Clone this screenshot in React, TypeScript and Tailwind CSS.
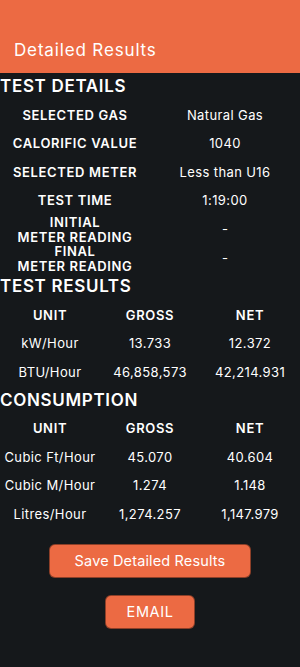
import React from "react";

const details: [string, string][] = [
  ["SELECTED GAS", "Natural Gas"],
  ["CALORIFIC VALUE", "1040"],
  ["SELECTED METER", "Less than U16"],
  ["TEST TIME", "1:19:00"],
];

const results: [string, string, string][] = [
  ["kW/Hour", "13.733", "12.372"],
  ["BTU/Hour", "46,858,573", "42,214.931"],
];

const consumption: [string, string, string][] = [
  ["Cubic Ft/Hour", "45.070", "40.604"],
  ["Cubic M/Hour", "1.274", "1.148"],
  ["Litres/Hour", "1,274.257", "1,147.979"],
];

function SectionTitle({ children }: { children: React.ReactNode }) {
  return (
    <h2 className="flex h-[28px] items-center pb-[1px] text-[17px] font-semibold tracking-[0.04em] text-white">
      {children}
    </h2>
  );
}

function Table({ rows }: { rows: [string, string, string][] }) {
  return (
    <div>
      <div className="grid h-[28.5px] grid-cols-3 items-center text-center text-[13px] font-semibold tracking-[0.05em] text-white">
        <span>UNIT</span>
        <span>GROSS</span>
        <span>NET</span>
      </div>
      {rows.map(([unit, gross, net]) => (
        <div
          key={unit}
          className="grid h-[28.5px] grid-cols-3 items-center text-center text-[13px] tracking-[0.03em] text-white"
        >
          <span>{unit}</span>
          <span>{gross}</span>
          <span>{net}</span>
        </div>
      ))}
    </div>
  );
}

export default function App() {
  return (
    <div className="flex min-h-[667px] w-[300px] flex-col bg-[#15181b] font-['Inter',sans-serif]">
      <header className="flex h-[73px] items-end bg-[#ec6a43] px-[14px] pb-[10px]">
        <h1 className="text-[17px] tracking-[0.05em] text-white">Detailed Results</h1>
      </header>

      <main className="flex flex-col">
        <SectionTitle>TEST DETAILS</SectionTitle>
        <div>
          {details.map(([label, value]) => (
            <div
              key={label}
              className="grid h-[28.6px] grid-cols-2 items-center text-center text-[13px] text-white"
            >
              <span className="font-semibold tracking-[0.05em]">{label}</span>
              <span className="tracking-[0.03em]">{value}</span>
            </div>
          ))}
          {["INITIAL", "FINAL"].map((label) => (
            <div
              key={label}
              className="grid h-[29px] grid-cols-2 items-center text-center text-[13px] text-white"
            >
              <span className="font-semibold leading-[14.5px] tracking-[0.05em]">
                {label}
                <br />
                METER READING
              </span>
              <span>-</span>
            </div>
          ))}
        </div>

        <SectionTitle>TEST RESULTS</SectionTitle>
        <Table rows={results} />

        <SectionTitle>CONSUMPTION</SectionTitle>
        <Table rows={consumption} />

        <div className="mt-[15px] flex flex-col items-center gap-[17px]">
          <button className="h-[34px] w-[202px] rounded-md border border-black/40 bg-[#ec6a43] text-[14.5px] tracking-[0.01em] text-white">
            Save Detailed Results
          </button>
          <button className="h-[34px] w-[90px] rounded-md border border-black/40 bg-[#ec6a43] text-[14.5px] tracking-[0.04em] text-white">
            EMAIL
          </button>
        </div>
      </main>
    </div>
  );
}
